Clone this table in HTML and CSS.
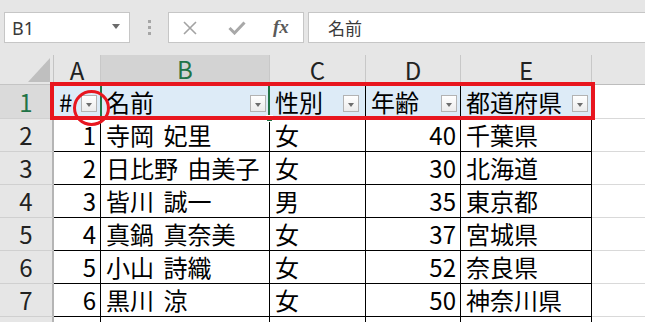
FILE: index.html
```html
<!DOCTYPE html>
<html lang="ja">
<head>
<meta charset="utf-8">
<title>Excel</title>
<link rel="stylesheet" href="styles.css">
</head>
<body>
<div class="app">
  <div class="toolbar">
    <div class="namebox">
      <span class="nb-text">B1</span>
      <svg class="caret" width="8" height="5" viewBox="0 0 8 5"><path d="M0 0H8L4 5Z" fill="#6b6b6b"/></svg>
    </div>
    <div class="grip"><i></i><i></i><i></i></div>
    <div class="fxbox">
      <svg class="ic-x" width="14" height="14" viewBox="0 0 14 14"><path d="M1 1L13 13M13 1L1 13" stroke="#a3a3a3" stroke-width="1.6" fill="none"/></svg>
      <svg class="ic-ok" width="18" height="14" viewBox="0 0 18 14"><path d="M1.5 7L6.5 12L16.5 1.5" stroke="#a8a8a8" stroke-width="3" fill="none"/></svg>
      <span class="fx">fx</span>
    </div>
    <div class="formula">名前</div>
  </div>

  <div class="sheet">
    <div class="corner"><svg width="54" height="30" viewBox="0 0 54 30"><path d="M28 27H50V3Z" fill="#bfbfbf"/></svg></div>
    <div class="ch">A</div>
    <div class="ch sel">B</div>
    <div class="ch">C</div>
    <div class="ch">D</div>
    <div class="ch">E</div>
    <div class="ch last"></div>

    <div class="rh sel">1</div>
    <div class="c hd"><span>#</span><span class="dd"></span></div>
    <div class="c hd active"><span>名前</span><span class="dd"></span></div>
    <div class="c hd"><span>性別</span><span class="dd dd-c"></span></div>
    <div class="c hd"><span>年齢</span><span class="dd"></span></div>
    <div class="c hd"><span>都道府県</span><span class="dd"></span></div>
    <div class="e"></div>

    <div class="rh">2</div>
    <div class="c num">1</div><div class="c">寺岡 妃里</div><div class="c">女</div><div class="c num">40</div><div class="c">千葉県</div><div class="e"></div>

    <div class="rh">3</div>
    <div class="c num">2</div><div class="c">日比野 由美子</div><div class="c">女</div><div class="c num">30</div><div class="c">北海道</div><div class="e"></div>

    <div class="rh">4</div>
    <div class="c num">3</div><div class="c">皆川 誠一</div><div class="c">男</div><div class="c num">35</div><div class="c">東京都</div><div class="e"></div>

    <div class="rh">5</div>
    <div class="c num">4</div><div class="c">真鍋 真奈美</div><div class="c">女</div><div class="c num">37</div><div class="c">宮城県</div><div class="e"></div>

    <div class="rh">6</div>
    <div class="c num">5</div><div class="c">小山 詩織</div><div class="c">女</div><div class="c num">52</div><div class="c">奈良県</div><div class="e"></div>

    <div class="rh">7</div>
    <div class="c num">6</div><div class="c">黒川 涼</div><div class="c">女</div><div class="c num">50</div><div class="c">神奈川県</div><div class="e"></div>

    <div class="rh"></div>
    <div class="c"></div><div class="c"></div><div class="c"></div><div class="c"></div><div class="c"></div><div class="e"></div>

    <div class="redbox"></div>
    <div class="redcircle"></div>
  </div>
</div>
</body>
</html>
```

FILE: styles.css
```css
html, body {
  margin: 0;
  padding: 0;
  background: #ffffff;
}
body {
  width: 645px;
  height: 322px;
  overflow: hidden;
  font-family: "Noto Sans CJK JP", "Noto Sans", sans-serif;
}
.app {
  width: 645px;
  height: 322px;
  overflow: hidden;
}

/* ---------- toolbar ---------- */
.toolbar {
  height: 55px;
  box-sizing: border-box;
  background: #e6e6e6;
  display: flex;
  align-items: flex-start;
  padding-top: 12px;
}
.namebox {
  margin-left: 4px;
  width: 126px;
  height: 31px;
  box-sizing: border-box;
  border: 1px solid #c6c6c6;
  background: #ffffff;
  display: flex;
  align-items: center;
  justify-content: space-between;
  padding: 0 9px 0 7px;
}
.nb-text {
  font-family: "Noto Sans", "Liberation Sans", sans-serif;
  font-size: 18px;
  color: #3a3a3a;
  line-height: 1;
}
.caret {
  margin-top: -2px;
}
.grip {
  margin-left: 18px;
  width: 3px;
  padding-top: 8px;
  display: flex;
  flex-direction: column;
  gap: 3px;
}
.grip i {
  display: block;
  width: 3px;
  height: 3px;
  background: #a6a6a6;
}
.fxbox {
  margin-left: 17px;
  width: 136px;
  height: 31px;
  box-sizing: border-box;
  border: 1px solid #c6c6c6;
  background: #ffffff;
  display: flex;
  align-items: center;
  padding-left: 14px;
}
.ic-x {
  margin-right: 31px;
}
.ic-ok {
  margin-right: 27px;
}
.fx {
  font-family: "Liberation Serif", serif;
  font-style: italic;
  font-weight: bold;
  font-size: 19px;
  color: #5a5a5a;
  line-height: 1;
  margin-top: -2px;
}
.formula {
  margin-left: 4px;
  flex: 1;
  height: 31px;
  box-sizing: border-box;
  border: 1px solid #c6c6c6;
  border-right: none;
  background: #ffffff;
  display: flex;
  align-items: center;
  padding-left: 19px;
  font-size: 17px;
  color: #3a3a3a;
}

/* ---------- sheet ---------- */
.sheet {
  position: relative;
  display: grid;
  grid-template-columns: 54px 47px 169px 96px 95px 131px 53px;
  grid-template-rows: 30px 34px repeat(7, 33px);
  font-size: 24px;
  line-height: 1;
  color: #000000;
}
.sheet > div {
  box-sizing: border-box;
}
.corner {
  background: #e6e6e6;
  border-right: 1px solid #c4c4c4;
  border-bottom: 1px solid #c4c4c4;
}
.corner svg {
  display: block;
}
.ch {
  background: #e6e6e6;
  border-right: 1px solid #c8c8c8;
  border-bottom: 1px solid #bdbdbd;
  display: flex;
  align-items: center;
  justify-content: center;
  color: #222222;
}
.ch.sel {
  background: #d3d3d3;
  color: #217346;
  border-bottom: 2px solid #217346;
}
.ch.last {
  border-right: none;
}
.rh {
  background: #e6e6e6;
  border-right: 2px solid #b5b5b5;
  border-bottom: 1px solid #d0d0d0;
  display: flex;
  align-items: center;
  justify-content: center;
  color: #222222;
}
.rh.sel {
  background: #dadada;
  color: #217346;
}
.c {
  border-right: 1px solid #000000;
  border-bottom: 1px solid #000000;
  background: #ffffff;
  display: flex;
  align-items: center;
  padding-left: 5px;
  white-space: pre;
  word-spacing: 4px;
}
.c.num {
  justify-content: flex-end;
  padding-left: 0;
  padding-right: 4px;
}
.c.hd {
  background: #ddebf7;
  justify-content: space-between;
  padding-right: 3px;
  position: relative;
}
.c.active::after {
  content: "";
  position: absolute;
  left: -1px;
  top: -1px;
  right: -1px;
  bottom: -1px;
  border: 2px solid #217346;
}
.c.active::before {
  content: "";
  position: absolute;
  right: -4px;
  bottom: -4px;
  width: 5px;
  height: 5px;
  background: #217346;
  border: 1px solid #ffffff;
  z-index: 2;
}
.dd {
  width: 16px;
  height: 17px;
  box-sizing: border-box;
  border: 1px solid #b3b3b3;
  background: linear-gradient(#ffffff, #ececec);
  align-self: flex-end;
  margin-bottom: 6px;
  position: relative;
  flex: none;
}
.dd::after {
  content: "";
  position: absolute;
  left: 4px;
  top: 7px;
  border-left: 3.5px solid transparent;
  border-right: 3.5px solid transparent;
  border-top: 4px solid #6d6d6d;
}
.dd-c {
  margin-right: 3px;
}
.e {
  border-bottom: 1px solid #d9d9d9;
  background: #ffffff;
}

/* ---------- annotations ---------- */
.redbox {
  position: absolute;
  left: 50px;
  top: 27px;
  width: 545px;
  height: 38px;
  box-sizing: border-box;
  border: 4px solid #e8161f;
  z-index: 5;
}
.redcircle {
  position: absolute;
  left: 73px;
  top: 35px;
  width: 37px;
  height: 36px;
  box-sizing: border-box;
  border: 3px solid #e8161f;
  border-radius: 50%;
  z-index: 6;
}
```
